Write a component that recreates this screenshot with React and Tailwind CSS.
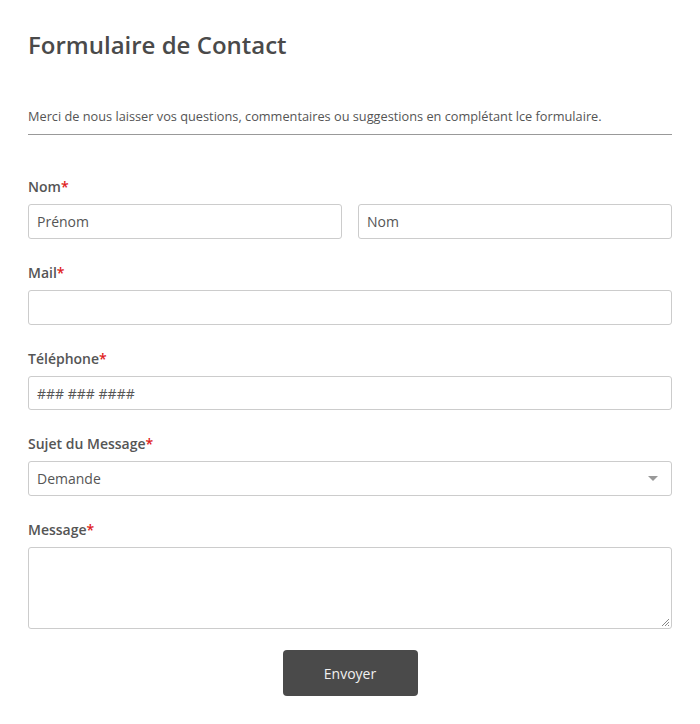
export default function App() {
  const label = "block text-[14px] leading-[20px] font-semibold text-[#555555] mb-[7px]";
  const input = "block w-full border border-[#cccccc] rounded-[3px] px-[8px] text-[14px] text-[#555555] bg-white";
  const Req = () => <span className="text-[#e01b1b]">*</span>;
  return (
    <div className="w-[700px] min-h-[724px] bg-white px-[28px] pt-[29px]" style={{ fontFamily: '"Open Sans", sans-serif' }}>
      <h1 className="text-[24px] leading-[32px] font-semibold text-[#4a4a4a]">Formulaire de Contact</h1>
      <p className="mt-[46px] text-[12.75px] leading-[18px] text-[#555555] pb-[9px] border-b border-[#999999]">
        Merci de nous laisser vos questions, commentaires ou suggestions en complétant lce formulaire.
      </p>
      <div className="mt-[42px]">
        <label className={label}>Nom<Req /></label>
        <div className="flex gap-[16px]">
          <div className={input + " h-[35px] flex items-center"}>Prénom</div>
          <div className={input + " h-[35px] flex items-center"}>Nom</div>
        </div>
      </div>
      <div className="mt-[24px]">
        <label className={label}>Mail<Req /></label>
        <div className={input + " h-[35px]"}></div>
      </div>
      <div className="mt-[24px]">
        <label className={label}>Téléphone<Req /></label>
        <div className={input + " flex items-center h-[34px]"}>### ### ####</div>
      </div>
      <div className="mt-[24px]">
        <label className={label}>Sujet du Message<Req /></label>
        <div className={input + " h-[35px] flex items-center justify-between"}>
          <span>Demande</span>
          <svg width="10" height="6" viewBox="0 0 10 6" className="mr-[5px]"><path d="M0 0 L10 0 L5 5 Z" fill="#999999" /></svg>
        </div>
      </div>
      <div className="mt-[24px]">
        <label className={label}>Message<Req /></label>
        <div className="relative block w-full h-[82px] border border-[#cccccc] rounded-[3px] bg-white">
          <svg width="9" height="9" viewBox="0 0 9 9" className="absolute right-[1px] bottom-[1px]">
            <path d="M1 8 L8 1 M4 8 L8 4 M7 8 L8 7" stroke="#888888" strokeWidth="1" />
          </svg>
        </div>
      </div>
      <div className="flex justify-center mt-[21px]">
        <button className="w-[135px] h-[46px] rounded-[4px] bg-[#4a4a4a] text-[14px] text-[#f0f0f0]">Envoyer</button>
      </div>
    </div>
  );
}
